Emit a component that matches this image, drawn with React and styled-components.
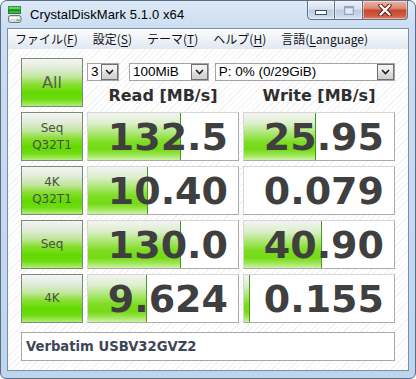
import React from 'react';
import styled, { createGlobalStyle } from 'styled-components';

const GlobalStyle = createGlobalStyle`
  html, body {
    margin: 0;
    padding: 0;
    background: #ffffff;
  }
  body {
    width: 416px;
    height: 379px;
    overflow: hidden;
  }
`;

const Window = styled.div`
  box-sizing: border-box;
  width: 416px;
  height: 379px;
  display: flex;
  flex-direction: column;
  border: 1px solid #5b6d84;
  border-radius: 7px 7px 6px 6px;
  background: linear-gradient(180deg, #dde9f7 0px, #cbdef2 26px, #bed5ee 100%);
  padding: 0 6px 7px;
`;

const TitleBar = styled.div`
  height: 27px;
  display: flex;
  align-items: center;
  flex-shrink: 0;
`;

const TitleIcon = styled.svg`
  margin-left: 1px;
  width: 14px;
  height: 17px;
  flex-shrink: 0;
`;

const TitleText = styled.span`
  margin-left: 8px;
  font-family: 'Liberation Sans', Arial, sans-serif;
  font-size: 13px;
  color: #000;
  letter-spacing: 0.1px;
`;

const Controls = styled.div`
  margin-left: auto;
  margin-right: 1px;
  margin-top: -1px;
  align-self: flex-start;
  display: flex;
`;

const CtlButton = styled.div`
  box-sizing: border-box;
  width: ${(p) => (p.$close ? '45px' : '28px')};
  height: 20px;
  display: flex;
  align-items: center;
  justify-content: center;
  border: 1px solid #5f7189;
  border-left-width: ${(p) => (p.$first ? '1px' : '0')};
  border-radius: ${(p) => (p.$first ? '0 0 0 4px' : p.$close ? '0 0 4px 0' : '0')};
  background: ${(p) =>
    p.$close
      ? 'linear-gradient(180deg, #eab3a4 0%, #dc8a74 40%, #c8472f 52%, #cf5a40 80%, #dc7d62 100%)'
      : 'linear-gradient(180deg, #e9f0f8 0%, #d8e3f0 42%, #bccde2 52%, #c6d6ea 80%, #d6e3f2 100%)'};
  box-shadow: inset 0 0 0 1px rgba(255, 255, 255, 0.45);
`;

const MinGlyph = styled.div`
  width: 10px;
  height: 3px;
  margin-top: 5px;
  background: #fff;
  border: 1px solid #40506a;
`;

const MaxGlyph = styled.div`
  box-sizing: border-box;
  width: 10px;
  height: 9px;
  border: 1px solid #97a6b8;
  border-top-width: 2px;
  background: #e4ebf3;
  box-shadow: inset 0 0 0 1px #c9d4e0;
`;

const Client = styled.div`
  flex: 1;
  display: flex;
  flex-direction: column;
  border: 1px solid #7b8fa6;
  background: repeating-linear-gradient(135deg, #ffffff 0 3px, #f2f2f2 3px 4px);
  min-height: 0;
`;

const MenuBar = styled.div`
  height: 20px;
  display: flex;
  align-items: center;
  gap: 15px;
  padding-left: 7px;
  background: linear-gradient(180deg, #fcfdfe 0%, #eef2f8 50%, #e1e8f2 100%);
  font-family: 'Noto Sans CJK JP', 'Noto Sans', sans-serif;
  font-size: 12px;
  color: #111;
  flex-shrink: 0;
`;

const MenuItem = styled.span`
  white-space: nowrap;
  line-height: 20px;
  u {
    text-underline-offset: 2px;
  }
`;

const Content = styled.div`
  flex: 1;
  display: flex;
  flex-direction: column;
  padding: 9px 13px 8px 13px;
`;

const Grid = styled.div`
  display: grid;
  grid-template-columns: 62px 152px 152px;
  grid-auto-rows: 49px;
  column-gap: 4px;
  row-gap: 5px;
`;

const GreenButton = styled.div`
  box-sizing: border-box;
  display: flex;
  flex-direction: column;
  align-items: center;
  justify-content: center;
  border: 1px solid #7c8a78;
  background: linear-gradient(
    180deg,
    #f4f5f3 0%,
    #e4ecdd 18%,
    #c2e69f 38%,
    #86df2e 55%,
    #62d900 72%,
    #6edc12 86%,
    #b2ee78 100%
  );
  font-family: 'DejaVu Sans', Verdana, sans-serif;
  color: ${(p) => (p.$big ? '#5a5a5a' : '#47513f')};
  font-size: ${(p) => (p.$big ? '16px' : '12px')};
  line-height: 17px;
`;

const TopArea = styled.div`
  grid-column: 2 / 4;
  display: flex;
  flex-direction: column;
`;

const ComboRow = styled.div`
  margin-top: 5px;
  display: flex;
  height: 18px;
`;

const Combo = styled.div`
  box-sizing: border-box;
  width: ${(p) => p.$w}px;
  margin-left: ${(p) => p.$ml || 0}px;
  height: 18px;
  display: flex;
  align-items: stretch;
  border: 1px solid #a4a4a4;
  background: #fff;
`;

const ComboText = styled.span`
  flex: 1;
  padding-left: 3px;
  font-family: 'Liberation Sans', Arial, sans-serif;
  font-size: 13.5px;
  line-height: 16px;
  color: #000;
  white-space: nowrap;
  overflow: hidden;
`;

const ComboArrow = styled.div`
  box-sizing: border-box;
  width: 17px;
  display: flex;
  align-items: center;
  justify-content: center;
  border: 1px solid #707070;
  background: linear-gradient(180deg, #f3f3f3 0%, #ebebeb 45%, #dddddd 55%, #cfcfcf 100%);
`;

const Headers = styled.div`
  margin-top: 5px;
  display: grid;
  grid-template-columns: 152px 152px;
  column-gap: 4px;
`;

const Header = styled.div`
  text-align: center;
  font-family: 'DejaVu Sans', Verdana, sans-serif;
  font-weight: bold;
  font-size: 16px;
  line-height: 20px;
  color: #2f2f2f;
`;

const ValueCell = styled.div`
  box-sizing: border-box;
  position: relative;
  display: flex;
  align-items: center;
  justify-content: flex-end;
  padding-right: 10px;
  border: 1px solid;
  border-color: #d6d6d6 #ababab #ababab #d6d6d6;
  background: #fff;
  overflow: hidden;
`;

const Bar = styled.div`
  position: absolute;
  left: 0;
  top: 0;
  bottom: 0;
  border-right: 1px solid #439a1f;
  background: linear-gradient(
    180deg,
    #f3f4f2 0%,
    #dcefcc 22%,
    #a6e66a 45%,
    #7edd22 62%,
    #74da16 78%,
    #9ee656 90%,
    #cdf3a8 100%
  );
`;

const Value = styled.span`
  position: relative;
  font-family: 'DejaVu Sans', Verdana, sans-serif;
  font-weight: bold;
  font-size: 38px;
  line-height: 40px;
  color: #3f3f3f;
`;

const DriveBox = styled.div`
  box-sizing: border-box;
  margin-top: 9px;
  height: 29px;
  display: flex;
  align-items: center;
  padding-left: 4px;
  border: 1px solid #a8a8a8;
  background: #fff;
  font-family: 'DejaVu Sans', Verdana, sans-serif;
  font-weight: bold;
  font-size: 13.2px;
  color: #3d4656;
`;

const rows = [
  { label: ['Seq', 'Q32T1'], read: '132.5', readBar: 92, write: '25.95', writeBar: 71 },
  { label: ['4K', 'Q32T1'], read: '10.40', readBar: 59, write: '0.079', writeBar: 0 },
  { label: ['Seq'], read: '130.0', readBar: 92, write: '40.90', writeBar: 77 },
  { label: ['4K'], read: '9.624', readBar: 58, write: '0.155', writeBar: 5 },
];

const menus = [
  ['ファイル(', 'F', ')'],
  ['設定(', 'S', ')'],
  ['テーマ(', 'T', ')'],
  ['ヘルプ(', 'H', ')'],
  ['言語(', 'L', 'anguage)'],
];

const Chevron = () => (
  <svg width="9" height="6" viewBox="0 0 9 6">
    <polyline points="1,1 4.5,4.5 8,1" fill="none" stroke="#1c1c1c" strokeWidth="1.6" />
  </svg>
);

const Cell = ({ value, bar }) => (
  <ValueCell>
    {bar > 0 && <Bar style={{ width: bar }} />}
    <Value>{value}</Value>
  </ValueCell>
);

export default function App() {
  return (
    <>
      <GlobalStyle />
      <Window>
        <TitleBar>
          <TitleIcon viewBox="0 0 14 17">
            <rect x="0.5" y="0.5" width="12" height="3" fill="#5fd35a" stroke="#2f9a35" />
            <rect x="0.5" y="4.5" width="12" height="3" fill="#3bb545" stroke="#25802c" />
            <rect x="0.5" y="9.5" width="12.5" height="7" rx="2" fill="#d9dcdf" stroke="#6e7378" />
            <rect x="2" y="11" width="9.5" height="2" fill="#f6f7f8" />
            <rect x="8.5" y="13.5" width="3" height="1.5" fill="#3ec43e" />
          </TitleIcon>
          <TitleText>CrystalDiskMark 5.1.0 x64</TitleText>
          <Controls>
            <CtlButton $first>
              <MinGlyph />
            </CtlButton>
            <CtlButton>
              <MaxGlyph />
            </CtlButton>
            <CtlButton $close>
              <svg width="14" height="12" viewBox="0 0 14 12">
                <path d="M2.5 1.5 L11.5 10.5 M11.5 1.5 L2.5 10.5" stroke="#5a1e14" strokeWidth="4.2" strokeLinecap="round" />
                <path d="M2.5 1.5 L11.5 10.5 M11.5 1.5 L2.5 10.5" stroke="#ffffff" strokeWidth="2.4" strokeLinecap="round" />
              </svg>
            </CtlButton>
          </Controls>
        </TitleBar>
        <Client>
          <MenuBar>
            {menus.map(([a, k, b]) => (
              <MenuItem key={a}>
                {a}
                <u>{k}</u>
                {b}
              </MenuItem>
            ))}
          </MenuBar>
          <Content>
            <Grid>
              <GreenButton $big>All</GreenButton>
              <TopArea>
                <ComboRow>
                  <Combo $w={32}>
                    <ComboText>3</ComboText>
                    <ComboArrow>
                      <Chevron />
                    </ComboArrow>
                  </Combo>
                  <Combo $w={80} $ml={10}>
                    <ComboText>100MiB</ComboText>
                    <ComboArrow>
                      <Chevron />
                    </ComboArrow>
                  </Combo>
                  <Combo $w={181} $ml={6}>
                    <ComboText>P: 0% (0/29GiB)</ComboText>
                    <ComboArrow>
                      <Chevron />
                    </ComboArrow>
                  </Combo>
                </ComboRow>
                <Headers>
                  <Header>Read [MB/s]</Header>
                  <Header>Write [MB/s]</Header>
                </Headers>
              </TopArea>
              {rows.map((r, i) => (
                <React.Fragment key={i}>
                  <GreenButton>
                    {r.label.map((l) => (
                      <span key={l}>{l}</span>
                    ))}
                  </GreenButton>
                  <Cell value={r.read} bar={r.readBar} />
                  <Cell value={r.write} bar={r.writeBar} />
                </React.Fragment>
              ))}
            </Grid>
            <DriveBox>Verbatim USBV32GVZ2</DriveBox>
          </Content>
        </Client>
      </Window>
    </>
  );
}
